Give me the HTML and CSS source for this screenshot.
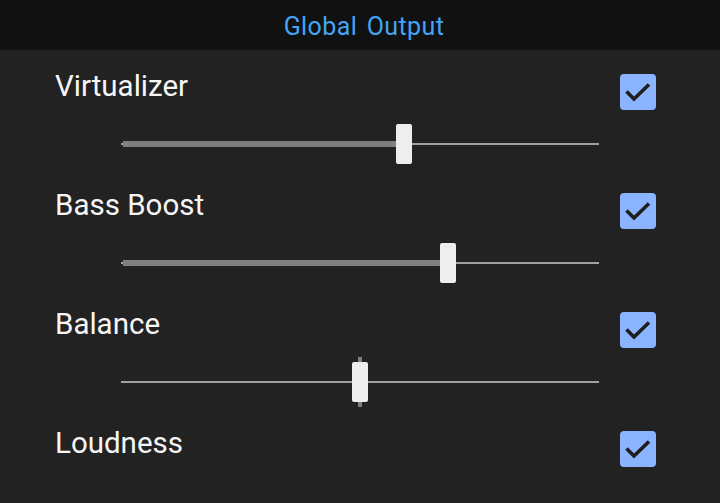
FILE: index.html
```html
<!DOCTYPE html>
<html lang="en">
<head>
	<meta charset="UTF-8">
	<meta name="viewport" content="width=device-width, initial-scale=1.0">
	<title>Global Output</title>
	<link rel="stylesheet" href="styles.css">
</head>
<body>
	<div class="header">Global Output</div>

	<div class="section">
		<div class="row">
			<div class="label">Virtualizer</div>
			<div class="check"><svg viewBox="0 0 36 36"><polyline points="6.5,17.5 14,25 29,10.5"/></svg></div>
		</div>
		<div class="slider">
			<div class="track"></div>
			<div class="fill" style="width: 281px"></div>
			<div class="thumb" style="left: 275px"></div>
		</div>
	</div>

	<div class="section">
		<div class="row">
			<div class="label">Bass Boost</div>
			<div class="check"><svg viewBox="0 0 36 36"><polyline points="6.5,17.5 14,25 29,10.5"/></svg></div>
		</div>
		<div class="slider">
			<div class="track"></div>
			<div class="fill" style="width: 325px"></div>
			<div class="thumb" style="left: 319px"></div>
		</div>
	</div>

	<div class="section">
		<div class="row">
			<div class="label">Balance</div>
			<div class="check"><svg viewBox="0 0 36 36"><polyline points="6.5,17.5 14,25 29,10.5"/></svg></div>
		</div>
		<div class="slider">
			<div class="track"></div>
			<div class="tick"></div>
			<div class="thumb" style="left: 231px"></div>
		</div>
	</div>

	<div class="section">
		<div class="row">
			<div class="label">Loudness</div>
			<div class="check"><svg viewBox="0 0 36 36"><polyline points="6.5,17.5 14,25 29,10.5"/></svg></div>
		</div>
	</div>
</body>
</html>
```

FILE: styles.css
```css
html, body { margin: 0; padding: 0; background-color: #222222; overflow: hidden; }
body { font-family: Roboto, "Noto Sans", sans-serif; color: #ffffff; }

div { box-sizing: border-box; }

.header {
	height: 50px;
	padding: 3px 0 0 8px;
	line-height: 47px;
	text-align: center;
	font-size: 25px;
	letter-spacing: 0.4px;
	word-spacing: 3px;
	color: #42a5f5;
	background-color: #111111;
	margin-bottom: 24px;
}

.section {
	display: flex;
	flex-direction: column;
	padding: 0 64px 0 55px;
}

.row {
	display: flex;
	justify-content: space-between;
	align-items: flex-start;
	height: 36px;
}
.row .label {
	font-size: 29.5px;
	line-height: 25px;
	color: #f6f6f6;
}
.row .check {
	width: 36px;
	height: 36px;
	border-radius: 4px;
	background-color: #8ab4ff;
}
.row .check svg {
	display: block;
	width: 36px;
	height: 36px;
	fill: none;
	stroke: #1f1f1f;
	stroke-width: 3.6;
}

.slider {
	position: relative;
	height: 40px;
	margin: 14px 57px 29px 66px;
}
.slider .track {
	position: absolute;
	left: 0;
	right: 0;
	top: 19px;
	height: 2px;
	background-color: #a0a0a0;
}
.slider .fill {
	position: absolute;
	left: 2px;
	top: 17px;
	height: 6px;
	background-color: #7f7f7f;
}
.slider .tick {
	position: absolute;
	left: 237px;
	top: -5px;
	width: 4px;
	height: 50px;
	background-color: #7f7f7f;
}
.slider .thumb {
	position: absolute;
	top: 0;
	width: 16px;
	height: 40px;
	border-radius: 2px;
	background-color: #eeeeee;
}
```
